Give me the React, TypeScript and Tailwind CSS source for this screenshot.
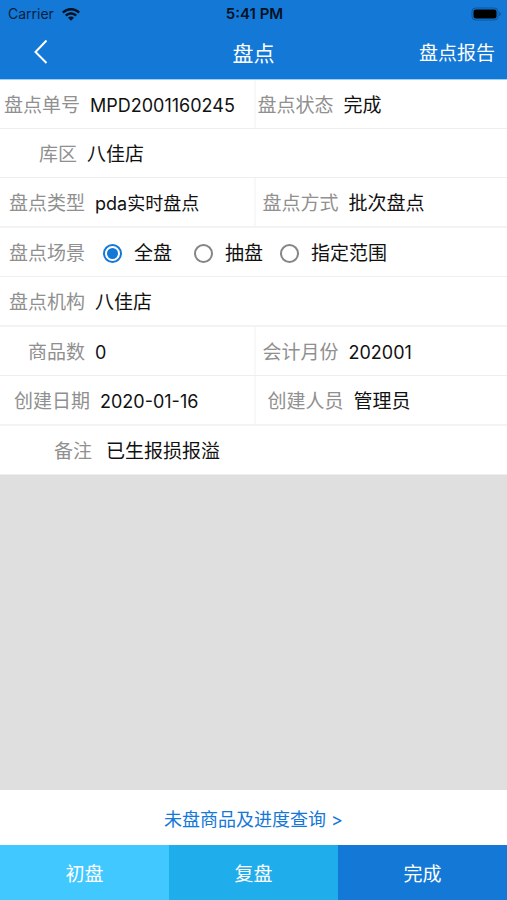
import { useState, type ReactNode } from "react";

const scopes = ["全盘", "抽盘", "指定范围"];

type FieldProps = {
  label: string;
  labelClass: string;
  valueClass?: string;
  children: ReactNode;
};

function Field({ label, labelClass, valueClass = "", children }: FieldProps) {
  return (
    <dl className="flex h-12 min-w-0 items-center gap-[10px] pt-1 whitespace-nowrap">
      <dt className={`shrink-0 text-right text-[#909090] ${labelClass}`}>{label}</dt>
      <dd className={`text-[#111] ${valueClass}`}>{children}</dd>
    </dl>
  );
}

function Row({ thin = false, children }: { thin?: boolean; children: ReactNode }) {
  return (
    <div
      className={`grid grid-cols-1 ${thin ? "border-b border-[#eeeeee]" : "border-b-2 border-[#f3f3f3]"}`}
    >
      {children}
    </div>
  );
}

function Pair({ left, right }: { left: ReactNode; right: ReactNode }) {
  return (
    <div className="grid grid-cols-2">
      {left}
      <div className="border-l-2 border-[#f8f8f8]">{right}</div>
    </div>
  );
}

function StatusBar() {
  return (
    <div className="grid h-7 grid-cols-3 items-center pr-[6px] pl-2 text-[14px] text-[#06213d]">
      <div className="flex items-center gap-2">
        <span>Carrier</span>
        <svg width="18" height="13" viewBox="0 0 18 13" fill="#021222" aria-hidden="true">
          <path d="M9 0C5.500 0 2.300 1.400 0 3.700L1.700 5.400C3.600 3.500 6.200 2.400 9 2.400s5.400 1.100 7.300 3L18 3.700C15.700 1.400 12.500 0 9 0Z" />
          <path d="M9 4.300c-2.300 0-4.400.9-6 2.400l1.700 1.700C5.800 7.300 7.300 6.700 9 6.700s3.200.6 4.300 1.700L15 6.700c-1.600-1.500-3.700-2.400-6-2.400Z" />
          <path d="M9 8.600c-1.200 0-2.200.4-3 1.200l3 3 3-3c-.8-.8-1.800-1.200-3-1.200Z" />
        </svg>
      </div>
      <span className="text-center text-[15px] font-semibold text-[#021222]">5:41 PM</span>
      <svg
        className="justify-self-end"
        width="30"
        height="14"
        viewBox="0 0 30 14"
        aria-hidden="true"
      >
        <rect x="1" y="1" width="26" height="12" rx="3.500" fill="none" stroke="#0d549b" strokeWidth="1" />
        <rect x="2.500" y="2.500" width="23" height="9" rx="2" fill="#000" />
        <path d="M28.200 5v4c1-.3 1.500-1.100 1.500-2s-.5-1.700-1.500-2Z" fill="#0d549b" />
      </svg>
    </div>
  );
}

export default function App() {
  const [scope, setScope] = useState(scopes[0]);

  return (
    <div className="flex min-h-screen flex-col bg-[#dfdfdf] font-[Inter,'Noto_Sans_CJK_SC',sans-serif] text-[19px] leading-7">
      <header className="border-b border-[#9bd0fa] bg-[#1478d6]">
        <StatusBar />
        <nav className="grid h-[51px] grid-cols-3 items-center text-white">
          <button type="button" aria-label="返回" className="justify-self-start px-8 pb-1">
            <svg width="18" height="26" viewBox="0 0 18 26" fill="none" aria-hidden="true">
              <path d="M14.500 1.500 3.500 13l11 11" stroke="#fff" strokeWidth="2" />
            </svg>
          </button>
          <h1 className="text-center text-[21px]">盘点</h1>
          <button type="button" className="justify-self-end pt-px pr-3">
            盘点报告
          </button>
        </nav>
      </header>

      <main className="bg-white">
        <Row thin>
          <Pair
            left={<Field label="盘点单号" labelClass="w-20" valueClass="text-[18px]">MPD2001160245</Field>}
            right={<Field label="盘点状态" labelClass="w-[78px]">完成</Field>}
          />
        </Row>
        <Row thin>
          <Field label="库区" labelClass="w-[77px]">八佳店</Field>
        </Row>
        <Row>
          <Pair
            left={<Field label="盘点类型" labelClass="w-[85px]" valueClass="text-[18px]">pda实时盘点</Field>}
            right={<Field label="盘点方式" labelClass="w-[83px]">批次盘点</Field>}
          />
        </Row>
        <Row thin>
          <fieldset className="flex h-12 items-center pt-1 whitespace-nowrap">
            <legend className="float-left w-[85px] text-right text-[#909090]">盘点场景</legend>
            <div className="grid grid-cols-[91px_86px_auto] pl-[18px]">
              {scopes.map((name) => (
                <label key={name} className="flex items-center gap-3 text-[#111]">
                  <input
                    type="radio"
                    name="scope"
                    value={name}
                    checked={scope === name}
                    onChange={() => setScope(name)}
                    className="mb-[2px] size-[19px] appearance-none rounded-full border-2 border-[#858585] bg-clip-content p-[2px] checked:border-[#1478d6] checked:bg-[#1478d6]"
                  />
                  {name}
                </label>
              ))}
            </div>
          </fieldset>
        </Row>
        <Row>
          <Field label="盘点机构" labelClass="w-[85px]">八佳店</Field>
        </Row>
        <Row thin>
          <Pair
            left={<Field label="商品数" labelClass="w-[85px]" valueClass="text-[18px]">0</Field>}
            right={<Field label="会计月份" labelClass="w-[83px]" valueClass="text-[18px]">202001</Field>}
          />
        </Row>
        <Row>
          <Pair
            left={<Field label="创建日期" labelClass="w-[90px]" valueClass="text-[18px]">2020-01-16</Field>}
            right={<Field label="创建人员" labelClass="w-[88px]">管理员</Field>}
          />
        </Row>
        <Row thin>
          <Field label="备注" labelClass="w-24 pr-1">已生报损报溢</Field>
        </Row>
      </main>

      <footer className="mt-auto">
        <a
          href="#progress"
          className="flex h-[55px] items-center justify-center bg-white pt-1 text-[18px] text-[#1478d6]"
        >
          未盘商品及进度查询 &gt;
        </a>
        <div className="grid h-[55px] grid-cols-3 text-white">
          <button type="button" className="bg-[#40c8ff] pt-1">初盘</button>
          <button type="button" className="bg-[#20adeb] pt-1">复盘</button>
          <button type="button" className="bg-[#1478d6] pt-1">完成</button>
        </div>
      </footer>
    </div>
  );
}
